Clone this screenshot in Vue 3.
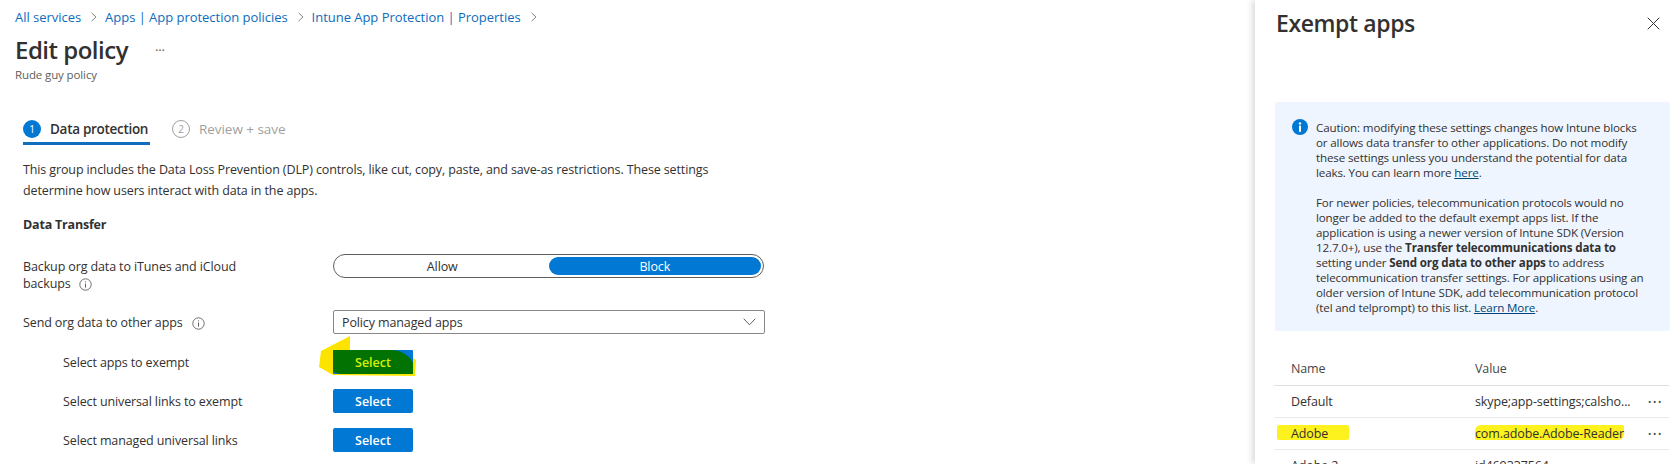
<script setup>
const infoLines1 = [
  'Caution: modifying these settings changes how Intune blocks',
  'or allows data transfer to other applications. Do not modify',
  'these settings unless you understand the potential for data'
]
const crumbs = ['All services', 'Apps | App protection policies', 'Intune App Protection | Properties']
</script>

<template>
  <div class="page">
    <main class="main">
      <nav class="crumbs">
        <template v-for="c in crumbs" :key="c">
          <a class="crumb">{{ c }}</a>
          <svg class="chev" width="8" height="10" viewBox="0 0 8 10"><path d="M1.5 .8 6 5 1.5 9.2" fill="none" stroke="#8a8886" stroke-width="1"/></svg>
        </template>
      </nav>
      <div class="title-row">
        <h1>Edit policy</h1>
        <span class="more">···</span>
      </div>
      <div class="subtitle">Rude guy policy</div>

      <div class="steps">
        <div class="step active"><span class="num">1</span><span>Data protection</span></div>
        <div class="step idle"><span class="num">2</span><span>Review + save</span></div>
      </div>

      <div class="content">
        <p class="intro">This group includes the Data Loss Prevention (DLP) controls, like cut, copy, paste, and save-as restrictions. These settings<br>determine how users interact with data in the apps.</p>
        <h2>Data Transfer</h2>

        <div class="row first">
          <div class="label">Backup org data to iTunes and iCloud<br>backups
            <svg class="tip" width="13" height="13" viewBox="0 0 13 13"><circle cx="6.5" cy="6.5" r="5.7" fill="none" stroke="#605e5c" stroke-width=".9"/><path d="M6.5 5.6v4M6.5 3.4v1" stroke="#605e5c" stroke-width="1"/></svg>
          </div>
          <div class="toggle"><span class="seg">Allow</span><span class="seg on">Block</span></div>
        </div>

        <div class="row second">
          <div class="label">Send org data to other apps
            <svg class="tip gap" width="13" height="13" viewBox="0 0 13 13"><circle cx="6.5" cy="6.5" r="5.7" fill="none" stroke="#605e5c" stroke-width=".9"/><path d="M6.5 5.6v4M6.5 3.4v1" stroke="#605e5c" stroke-width="1"/></svg>
          </div>
          <div class="dropdown"><span>Policy managed apps</span>
            <svg width="13" height="8" viewBox="0 0 13 8"><path d="M.7.7 6.5 6.8 12.3.7" fill="none" stroke="#605e5c" stroke-width="1"/></svg>
          </div>
        </div>

        <div class="row sub">
          <div class="label">Select apps to exempt</div>
          <button class="btn marked">
            <svg class="scribble" width="120" height="50" viewBox="0 0 120 50">
              <path d="M50 6 L21 21 L19 37 L33 45 L115 46 L116 30 L100 20 L50 20Z" fill="#fde400"/>
              <rect x="33" y="20" width="80" height="24" rx="1" fill="#0078d4"/>
              <path d="M33 20H92C104 21 110 27 113 33V44H40L33 42Z" fill="#027202"/>
            </svg>
            <span class="btn-text">Select</span>
          </button>
        </div>
        <div class="row sub">
          <div class="label">Select universal links to exempt</div>
          <button class="btn"><span class="btn-text">Select</span></button>
        </div>
        <div class="row sub">
          <div class="label">Select managed universal links</div>
          <button class="btn"><span class="btn-text">Select</span></button>
        </div>
      </div>
    </main>

    <aside class="panel">
      <header class="panel-head">
        <h3>Exempt apps</h3>
        <svg width="13" height="13" viewBox="0 0 13 13"><path d="M.7.7l11.6 11.6M12.3.7.7 12.3" stroke="#323130" stroke-width="1" fill="none"/></svg>
      </header>

      <section class="info">
        <svg class="info-icon" width="16" height="16" viewBox="0 0 16 16"><circle cx="8" cy="8" r="8" fill="#0078d4"/><rect x="7" y="6.6" width="2" height="6.2" fill="#fff"/><circle cx="8" cy="4.4" r="1.2" fill="#fff"/></svg>
        <div class="info-text">
          <template v-for="l in infoLines1" :key="l">{{ l }}<br></template>
          leaks. You can learn more <a>here</a>.<br><br>
          For newer policies, telecommunication protocols would no<br>
          longer be added to the default exempt apps list. If the<br>
          application is using a newer version of Intune SDK (Version<br>
          12.7.0+), use the <b>Transfer telecommunications data to</b><br>
          setting under <b>Send org data to other apps</b> to address<br>
          telecommunication transfer settings. For applications using an<br>
          older version of Intune SDK, add telecommunication protocol<br>
          (tel and telprompt) to this list. <a>Learn More</a>.
        </div>
      </section>

      <div class="table">
        <div class="tr head"><span>Name</span><span>Value</span><span></span></div>
        <div class="tr"><span>Default</span><span>skype;app-settings;calsho...</span><span class="dots">•••</span></div>
        <div class="tr">
          <span class="hl-wrap"><i class="hl hl-name"></i><span class="over">Adobe</span></span>
          <span class="hl-wrap"><i class="hl hl-value"></i><span class="over">com.adobe.Adobe-Reader</span></span>
          <span class="dots">•••</span>
        </div>
        <div class="tr"><span>Adobe 2</span><span>id469337564</span><span class="dots">•••</span></div>
      </div>
    </aside>
  </div>
</template>

<style>
html, body { margin: 0; background: #fff; overflow: hidden; }
</style>

<style scoped>
.page {
  display: flex;
  width: 1672px;
  height: 464px;
  overflow: hidden;
  background: #fff;
  font-family: "Open Sans", "Liberation Sans", sans-serif;
  font-size: 12.5px;
  letter-spacing: -0.12px;
  color: #323130;
}
.main { flex: 1; min-width: 0; padding-top: 8px; }
.crumbs { display: flex; align-items: center; height: 18px; padding-left: 15px; }
.crumb { color: #0f6cbd; font-size: 13px; letter-spacing: -0.03px; white-space: nowrap; }
.chev { margin: 0 7px 0 9px; }
.title-row { display: flex; align-items: center; height: 32px; margin-top: 8px; padding-left: 15px; }
h1 { margin: 0; font-size: 24px; font-weight: 600; letter-spacing: -0.5px; line-height: 32px; }
.more { margin-left: 27px; font-size: 13px; line-height: 32px; color: #605e5c; }
.subtitle { height: 18px; line-height: 18px; padding-left: 15px; font-size: 11.5px; color: #605e5c; }
.steps { display: flex; margin: 25px 0 0 23px; height: 36px; }
.step { display: flex; align-items: center; gap: 9px; box-sizing: border-box; font-size: 13.5px; }
.step.active { width: 127px; height: 36px; padding-top: 6px; border-bottom: 3px solid #0f6fbe; font-weight: 600; letter-spacing: -0.3px; }
.step.idle { margin-left: 22px; color: #a19f9d; height: 36px; padding-top: 3px; letter-spacing: -0.05px; }
.num { display: flex; align-items: center; justify-content: center; box-sizing: border-box; width: 18px; height: 18px; border-radius: 50%; font-size: 10px; font-weight: 400; letter-spacing: 0; }
.active .num { background: #0078d4; color: #fff; }
.idle .num { border: 1px solid #a19f9d; }
.content { padding-left: 23px; }
.intro { margin: 14px 0 0; line-height: 21px; white-space: nowrap; }
h2 { margin: 14px 0 0; font-size: 12.5px; line-height: 20px; font-weight: 700; letter-spacing: -0.2px; }
.row { display: grid; grid-template-columns: 310px 432px; align-items: center; }
.row.first { margin-top: 19px; align-items: start; height: 46px; }
.row.second { margin-top: 10px; height: 24px; }
.row.sub { height: 24px; margin-top: 15px; padding-left: 40px; grid-template-columns: 270px 80px; }
.row.second + .row.sub { margin-top: 16px; }
.label { line-height: 17px; white-space: nowrap; }
.first .label { padding-top: 4px; }
.tip { vertical-align: -3px; margin-left: 5px; }
.tip.gap { margin-left: 6px; }
.toggle { display: flex; box-sizing: border-box; width: 431px; height: 24px; padding: 2px; border: 1px solid #605e5c; border-radius: 12px; }
.seg { flex: 1; display: flex; align-items: center; justify-content: center; border-radius: 10px; }
.seg.on { background: #0078d4; color: #fff; }
.dropdown { display: flex; align-items: center; justify-content: space-between; box-sizing: border-box; width: 432px; height: 24px; padding: 0 8px 0 8px; border: 1px solid #8a8886; border-radius: 2px; }
.btn { position: relative; width: 80px; height: 24px; padding: 0; border: 0; border-radius: 2px; background: #0078d4; font: inherit; font-weight: 600; color: #fff; }
.btn-text { position: relative; z-index: 1; }
.marked { background: none; }
.marked .btn-text { color: #d6f000; }
.scribble { position: absolute; left: -33px; top: -20px; }
.panel {
  flex: none;
  box-sizing: border-box;
  width: 417px;
  height: 464px;
  padding-left: 20px;
  box-shadow: -3px 0 6px rgba(0, 0, 0, .14);
}
.panel-head { display: flex; align-items: center; justify-content: space-between; height: 46px; padding: 0 12px 0 1px; }
h3 { margin: 0; font-size: 23px; font-weight: 600; letter-spacing: -0.4px; }
.info { display: flex; box-sizing: border-box; width: 395px; height: 229px; margin-top: 56px; padding: 18px 0 0 17px; border-radius: 2px; background: #eff5fe; }
.info-icon { flex: none; margin: -1px 8px 0 0; }
.info-text { font-size: 11.6px; line-height: 15px; letter-spacing: -0.14px; white-space: nowrap; }
.info a { color: #004578; text-decoration: underline; }
.table { width: 395px; margin-top: 20px; margin-left: -1px; }
.tr { display: grid; grid-template-columns: 184px 170px 1fr; align-items: center; height: 32px; padding-left: 17px; border-bottom: 1px solid #edebe9; box-sizing: border-box; font-size: 12.5px; white-space: nowrap; }
.tr.head { height: 35px; border-bottom-color: #e1dfdd; font-weight: 500; color: #484644; }
.dots { font-size: 9px; letter-spacing: 1.6px; color: #484644; text-align: right; padding-right: 6px; }
.hl-wrap { position: relative; }
.over { position: relative; }
.hl { position: absolute; top: 0; height: 15px; background: #fdf21e; }
.hl-name { left: -14px; width: 72px; border-radius: 2px; }
.hl-value { left: 0; width: 149px; border-radius: 6px 2px 6px 2px; }
</style>
